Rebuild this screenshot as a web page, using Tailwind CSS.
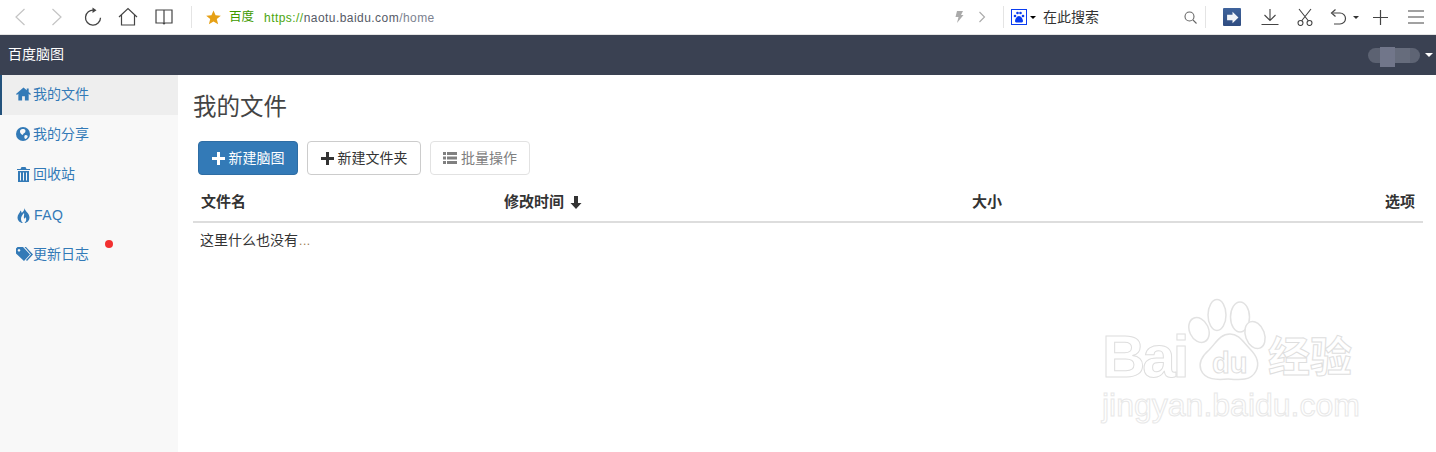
<!DOCTYPE html>
<html><head><meta charset="utf-8">
<script src="https://cdn.jsdelivr.net/npm/@tailwindcss/browser@4"></script>
</head>
<body class="bg-white overflow-hidden font-['Liberation_Sans','Noto_Sans_CJK_SC',sans-serif]">
<div class="relative w-[1436px] h-[452px] overflow-hidden flex flex-col">
  <!-- browser toolbar -->
  <header class="h-[35px] shrink-0 flex items-center pr-[12px] border-b border-[#e4e4e4] text-[#555]">
    <svg class="ml-[14px] w-[12px] h-[18px]" viewBox="0 0 12 18" fill="none" stroke="#c4c4c4" stroke-width="1.2"><path d="M10.5 1 2 9l8.500 8"/></svg>
    <svg class="ml-[25px] w-[12px] h-[18px]" viewBox="0 0 12 18" fill="none" stroke="#c4c4c4" stroke-width="1.2"><path d="M1.500 1 10 9l-8.500 8"/></svg>
    <svg class="ml-[20px] w-[20px] h-[20px]" viewBox="0 0 20 20" fill="none" stroke="#444" stroke-width="1.3"><path d="M11 3.200a7.500 7.500 0 1 0 6.500 7.500"/><path d="M9.500 .5 13.500 3.200 9.500 6z" fill="#444" stroke="none"/></svg>
    <svg class="ml-[15px] w-[20px] h-[20px]" viewBox="0 0 20 20" fill="none" stroke="#444" stroke-width="1.2"><path d="M1 10 10 1.500 19 10M3.500 8v10h13V8"/></svg>
    <svg class="ml-[17px] w-[18px] h-[18px]" viewBox="0 0 18 18" fill="none" stroke="#444" stroke-width="1.2"><path d="M9 2v14M9 2H1v13h7l1 1 1-1h7V2z"/></svg>
    <div class="ml-[18px] w-px h-[22px] bg-[#e4e4e4]"></div>
    <svg class="ml-[14px] w-[15px] h-[15px]" viewBox="0 0 16 16" fill="#e6a015"><path d="M8 .5l2.200 5.200 5.600.4-4.300 3.600 1.400 5.500L8 12.300 3.100 15.200l1.400-5.500L.2 6.100l5.600-.4z"/></svg>
    <span class="ml-[8px] mt-[1px] text-[12.500px] text-[#3d9a00]">百度</span>
    <span class="ml-[10px] mt-[1px] text-[12px] tracking-[.45px]"><span class="text-[#4ca60f]">https://</span><span class="text-[#555a66]">naotu.baidu.com</span><span class="text-[#7c8290]">/home</span></span>
    <svg class="ml-auto w-[10px] h-[14px]" viewBox="0 0 10 14" fill="#aaa"><path d="M3 1h6L7 5h2.500L3 13l1.500-6H1.500z"/></svg>
    <svg class="ml-[14px] w-[8px] h-[12px]" viewBox="0 0 8 12" fill="none" stroke="#aaa" stroke-width="1.1"><path d="M1.500 1 6.500 6l-5 5"/></svg>
    <div class="ml-[17px] w-px h-[22px] bg-[#e4e4e4]"></div>
    <div class="ml-[7px] w-[16px] h-[16px] border border-[#0a3cf0] flex items-center justify-center">
      <svg class="w-[12px] h-[12px]" viewBox="0 0 12 12" fill="#0a3cf0"><circle cx="2" cy="5" r="1.300"/><circle cx="4.500" cy="2" r="1.300"/><circle cx="7.500" cy="2" r="1.300"/><circle cx="10" cy="5" r="1.300"/><path d="M6 5c2 0 4 3 4 5 0 2-2 1.500-4 1.500S2 12 2 10c0-2 2-5 4-5z"/></svg>
    </div>
    <div class="ml-[3px] w-0 h-0 border-x-[3px] border-x-transparent border-t-[3px] border-t-black"></div>
    <span class="ml-[7px] mt-[1px] text-[14px] text-[#333] w-[130px]">在此搜索</span>
    <svg class="ml-[11px] w-[13px] h-[13px]" viewBox="0 0 13 13" fill="none" stroke="#666" stroke-width="1.100"><circle cx="5.500" cy="5.500" r="4.500"/><path d="m9 9 3.500 3.500"/></svg>
    <div class="ml-[8px] w-px h-[22px] bg-[#e4e4e4]"></div>
    <div class="ml-[17px] w-[18px] h-[18px] bg-gradient-to-b from-[#3f639c] to-[#2f4c80] rounded-[1px] flex items-center justify-center">
      <svg class="w-[13px] h-[13px]" viewBox="0 0 12 12" fill="#f2f4f8"><path d="M1 3.500h5V.8L11.500 6 6 11.200V8.500H1z"/></svg>
    </div>
    <svg class="ml-[20px] w-[18px] h-[18px]" viewBox="0 0 18 18" fill="none" stroke="#444" stroke-width="1.100"><path d="M9 1v11M3.500 7 9 12.500 14.500 7M.5 16.500h17"/></svg>
    <svg class="ml-[18px] w-[16px] h-[18px]" viewBox="0 0 16 18" fill="none" stroke="#444" stroke-width="1.100"><path d="M2 1l9.500 12M14 1 4.500 13"/><circle cx="3.500" cy="15" r="2.500"/><circle cx="12.500" cy="15" r="2.500"/></svg>
    <svg class="ml-[17px] w-[17px] h-[18px]" viewBox="0 0 17 18" fill="none" stroke="#444" stroke-width="1.200"><path d="M3 5h7a5.500 5.500 0 0 1 0 11H4"/><path d="M5.500 1.500 1.500 5l4 3.500"/></svg>
    <div class="ml-[6px] w-0 h-0 border-x-[3px] border-x-transparent border-t-[3px] border-t-[#333]"></div>
    <svg class="ml-[14px] w-[15px] h-[15px]" viewBox="0 0 15 15" stroke="#444" stroke-width="1.200"><path d="M7.500 0v15M0 7.500h15"/></svg>
    <svg class="ml-[20px] w-[16px] h-[14px]" viewBox="0 0 16 14" stroke="#444" stroke-width="1.100"><path d="M0 1h16M0 7h16M0 13h16"/></svg>
  </header>

  <!-- app navbar -->
  <nav class="h-[40px] shrink-0 bg-[#3a4152] flex items-center justify-between pl-[8px] pr-[3px] text-white">
    <span class="text-[14px] pb-[2px]">百度脑图</span>
    <div class="flex items-center">
      <div class="w-[12px] h-[15px] rounded-l-full bg-[#5c6272]"></div>
      <div class="w-[15px] h-[20px] mt-[3px] bg-[#71768a]"></div>
      <div class="w-[15px] h-[15px] bg-[#666c7c]"></div>
      <div class="w-[10px] h-[15px] rounded-r-full bg-[#5e6474]"></div>
      <div class="ml-[5px] w-0 h-0 border-x-[4px] border-x-transparent border-t-[4px] border-t-white"></div>
    </div>
  </nav>

  <div class="flex flex-1 min-h-0">
    <!-- sidebar -->
    <aside class="w-[178px] shrink-0 bg-[#f8f8f8] text-[14px] text-[#337ab7]">
      <a class="h-[40px] pb-[2px] flex items-center pl-[14px] bg-[#eeeeee] border-l-2 border-[#23527c]">
        <svg class="w-[15px] h-[14px] mr-[2px]" viewBox="0 0 16 14" fill="#337ab7"><path d="M8 0 0 7l1 1 1.500-1.200V14H6.500V9.500h3V14h4V6.800L15 8l1-1-2.500-2.200V1h-2v2z"/></svg>
        <span>我的文件</span>
      </a>
      <a class="h-[40px] pb-[2px] flex items-center pl-[16px]">
        <svg class="w-[14px] h-[14px] mr-[3px]" viewBox="0 0 14 14"><circle cx="7" cy="7" r="7" fill="#337ab7"/><path d="M5 2.500c2-1 4.500-.5 4.500 1.500S7.500 6 7 7.500 4 6 4 5 4 3 5 2.500zM9.500 8c2 0 2.800 1 1.800 2.500S9 12.500 8.500 11 8.500 8 9.500 8z" fill="#f8f8f8"/></svg>
        <span>我的分享</span>
      </a>
      <a class="h-[40px] pb-[2px] flex items-center pl-[17px]">
        <svg class="w-[13px] h-[15px] mr-[3px]" viewBox="0 0 13 15" fill="#337ab7"><path d="M4.500 0h4L9.500 2H13v1H0V2h3.500zM1 4h11v11H1zM3 5.500v8h1v-8zM6 5.500v8h1v-8zM9 5.500v8h1v-8z" fill-rule="evenodd"/></svg>
        <span>回收站</span>
      </a>
      <a class="h-[40px] flex items-center pl-[17px]">
        <svg class="w-[13px] h-[15px] mr-[4px]" viewBox="0 0 13 15" fill="#337ab7"><path d="M7.500 0c0 3 5 5 5 9.500 0 3-2.500 5.500-5 5.500 1.500-1.500 2.500-3.500 1-6-.3 1-1 1.500-1.500 1.500C6.500 8.500 7.500 6.500 7 5 5.500 6.500 4 8.500 4 11c0 1.500.7 3 2 4-3 0-5.500-2.500-5.500-5.500S3 5 3.500 2.500c.7.700 1.200 1.500 1.200 2.500C6 4 7.500 2 7.500 0z"/></svg>
        <span class="text-[14px] tracking-[.5px]">FAQ</span>
      </a>
      <a class="relative h-[40px] pb-[2px] flex items-center pl-[16px]">
        <svg class="w-[17px] h-[15px]" viewBox="0 0 17 15" fill="#337ab7"><path d="M0 1.500 1.500 0h5.500l7 7.500-6 6.500L0 6.500zM3 2a1.300 1.300 0 1 0 .01 0z" fill-rule="evenodd"/><path d="M8.500 0h1.500l7 7.500-6 6.500-1-1 5-5.500z"/></svg>
        <span>更新日志</span>
        <i class="absolute left-[105px] top-[5px] w-[8px] h-[8px] rounded-full bg-[#f23030]"></i>
      </a>
    </aside>

    <!-- main -->
    <main class="flex-1 pl-[15px] pr-[13px] text-[#333]">
      <h1 class="mt-[15px] h-[34px] leading-[34px] text-[23.500px] font-normal text-[#444]">我的文件</h1>
      <div class="mt-[17px] ml-[5px] flex gap-[9px] text-[14px]">
        <button class="h-[34px] w-[100px] flex items-center justify-center gap-[4px] rounded bg-[#337ab7] border border-[#2e6da4] text-white">
          <svg class="w-[13px] h-[13px]" viewBox="0 0 13 13" fill="#fff"><path d="M5 0h3v5h5v3H8v5H5V8H0V5h5z"/></svg><span>新建脑图</span>
        </button>
        <button class="h-[34px] w-[114px] flex items-center justify-center gap-[4px] rounded bg-white border border-[#ccc] text-[#333]">
          <svg class="w-[13px] h-[13px]" viewBox="0 0 13 13" fill="#333"><path d="M5 0h3v5h5v3H8v5H5V8H0V5h5z"/></svg><span>新建文件夹</span>
        </button>
        <button class="h-[34px] w-[100px] flex items-center justify-center gap-[4px] rounded bg-white border border-[#e2e2e2] text-[#808080]">
          <svg class="w-[14px] h-[12px]" viewBox="0 0 14 12" fill="#808080"><path d="M0 0h3v3H0zM4 0h10v3H4zM0 4.500h3v3H0zM4 4.500h10v3H4zM0 9h3v3H0zM4 9h10v3H4z"/></svg><span>批量操作</span>
        </button>
      </div>
      <table class="mt-[9px] w-full text-[15px] border-collapse">
        <thead>
          <tr class="h-[38px] border-b-2 border-[#dddddd] font-bold">
            <th class="w-[303px] pl-[8px] text-left">文件名</th>
            <th class="w-[468px] pl-[8px] text-left">
              <span class="inline-flex items-center gap-[6px]">修改时间
                <svg class="w-[12px] h-[13px]" viewBox="0 0 12 13" fill="#333"><path d="M4 0h4v7h3.500L6 13 .5 7H4z"/></svg>
              </span>
            </th>
            <th class="pl-[8px] text-left">大小</th>
            <th class="pr-[8px] text-right">选项</th>
          </tr>
        </thead>
        <tbody>
          <tr class="h-[35px]"><td colspan="4" class="pl-[7px] text-[14px]">这里什么也没有<span class="ml-[1px] text-[#997a4d] text-[12px] tracking-[.6px]">...</span></td></tr>
        </tbody>
      </table>
    </main>
  </div>

  <!-- watermark over the page -->
  <div class="absolute left-[1100px] top-[298px] w-[260px] h-[125px] pointer-events-none">
    <svg class="absolute left-[88px] top-0 w-[80px] h-[92px]" viewBox="0 0 80 92" fill="#fff" stroke="#e2e2e2" stroke-width="1.500">
      <ellipse cx="11" cy="32" rx="9.500" ry="13" transform="rotate(-25 11 32)"/>
      <ellipse cx="29" cy="17" rx="9" ry="15.500"/>
      <ellipse cx="52" cy="19" rx="9.500" ry="15"/>
      <ellipse cx="67" cy="37" rx="9.500" ry="14" transform="rotate(-20 67 37)"/>
      <path d="M42 36c9 0 13 8 20 15 7 7 10 14 6 22-5 10-16 9-28 8-11 1-23 1-27-9-3-8 1-14 8-20 7-7 11-16 21-16z"/>
    </svg>
    <div class="absolute left-[2px] top-[29px] text-[60px] leading-[60px] tracking-[-3px] font-bold text-transparent [-webkit-text-stroke:1px_#dedede]">Bai</div>
    <div class="absolute left-[112px] top-[50px] text-[29px] leading-[30px] font-bold text-transparent [-webkit-text-stroke:1px_#dedede]">du</div>
    <div class="absolute left-[168px] top-[39px] text-[42px] leading-[42px] font-bold text-transparent [-webkit-text-stroke:1px_#dedede]">经验</div>
    <div class="absolute left-[2px] top-[91px] text-[32px] leading-[32px] text-transparent [-webkit-text-stroke:1px_#e8e8e8]">jingyan.baidu.com</div>
  </div>
</div>
</body></html>
